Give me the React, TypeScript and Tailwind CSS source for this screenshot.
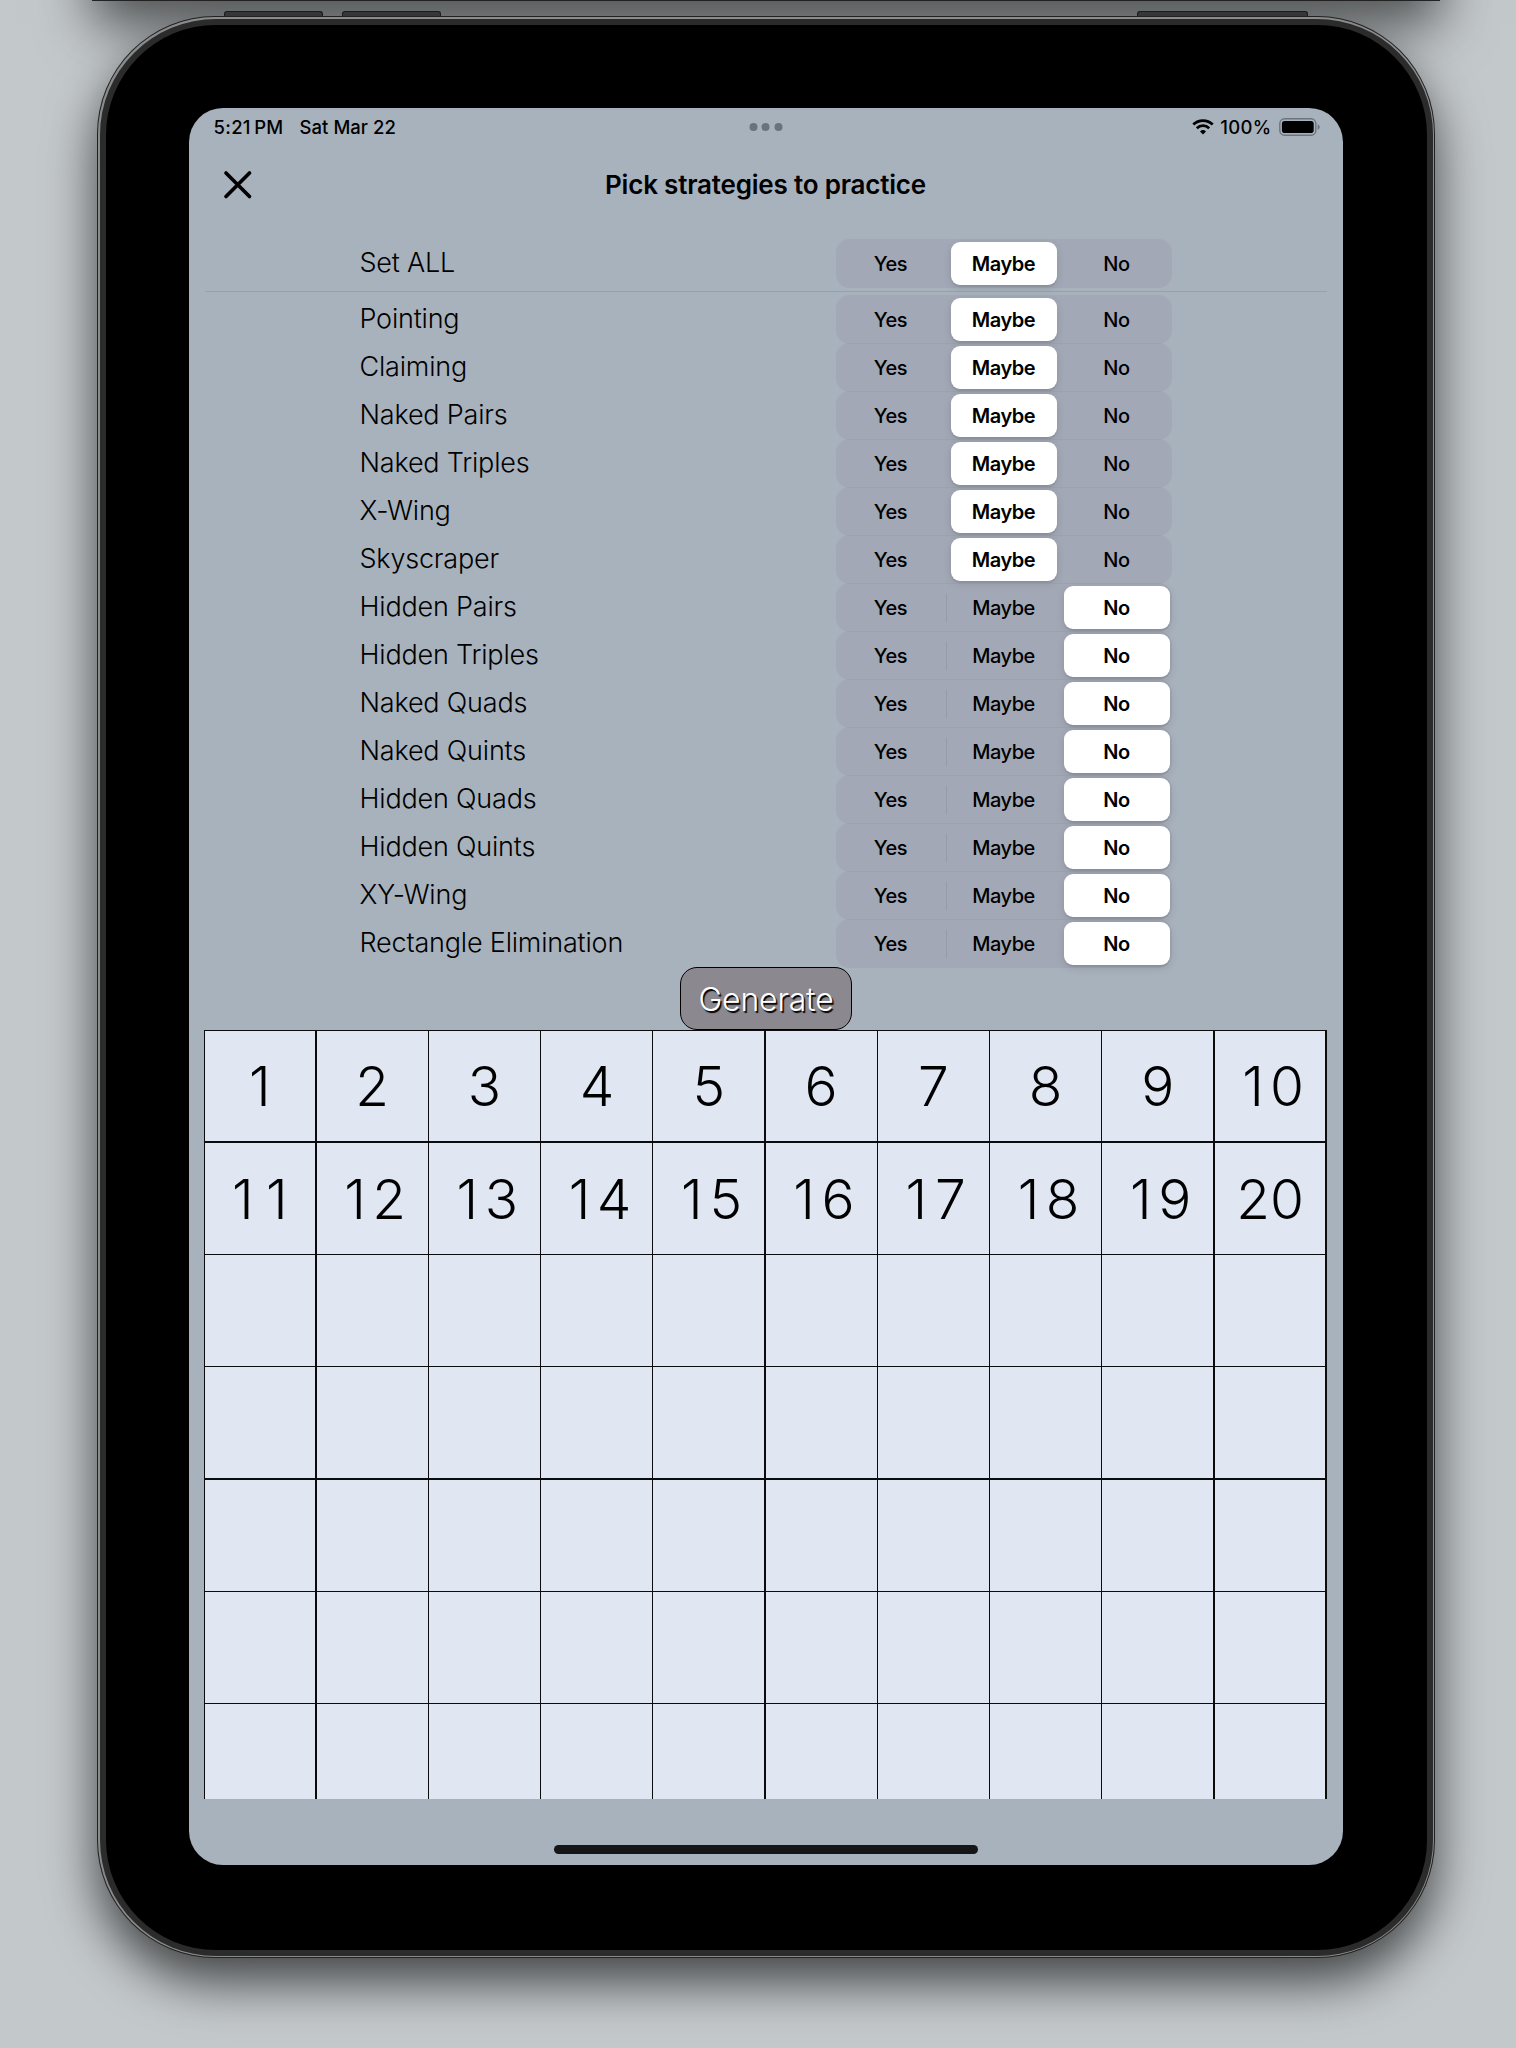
type Choice = "Yes" | "Maybe" | "No";

const CHOICES: Choice[] = ["Yes", "Maybe", "No"];

const STRATEGIES: { name: string; value: Choice }[] = [
  { name: "Pointing", value: "Maybe" },
  { name: "Claiming", value: "Maybe" },
  { name: "Naked Pairs", value: "Maybe" },
  { name: "Naked Triples", value: "Maybe" },
  { name: "X-Wing", value: "Maybe" },
  { name: "Skyscraper", value: "Maybe" },
  { name: "Hidden Pairs", value: "No" },
  { name: "Hidden Triples", value: "No" },
  { name: "Naked Quads", value: "No" },
  { name: "Naked Quints", value: "No" },
  { name: "Hidden Quads", value: "No" },
  { name: "Hidden Quints", value: "No" },
  { name: "XY-Wing", value: "No" },
  { name: "Rectangle Elimination", value: "No" },
];

const CELLS = Array.from({ length: 70 }, (_, i) => (i < 20 ? String(i + 1) : ""));

function Segmented({ value }: { value: Choice }) {
  return (
    <div className="relative flex h-[49px] w-[336px] justify-between rounded-[14px] bg-[#9693a5]/30 px-[2px]">
      {CHOICES.map((choice) => (
        <button
          key={choice}
          className={
            choice === value
              ? "my-[3px] w-[106px] rounded-[9px] bg-white pt-px text-[20px] font-[560] tracking-[-0.45px] shadow-[0_3px_8px_rgba(0,0,0,0.12),0_2px_1px_rgba(0,0,0,0.06)]"
              : "my-[3px] w-[106px] pt-px text-[20px] font-[450] tracking-[-0.45px]"
          }
        >
          {choice}
        </button>
      ))}
      {value === "No" && <span className="absolute left-[110px] top-[11px] h-[28px] w-px bg-[#979ca9]" />}
    </div>
  );
}

function Row({ name, value }: { name: string; value: Choice }) {
  return (
    <div className="-mb-px flex h-[49px] items-center justify-between pl-[171px] pr-[171px]">
      <span className="text-[27px] font-light leading-8 tracking-[-0.2px]">{name}</span>
      <Segmented value={value} />
    </div>
  );
}

function StatusBar() {
  return (
    <div className="relative flex h-[38px] items-center justify-between pl-[25px] pr-[23px] text-[18.5px] font-[450]">
      <div className="flex pt-[2px]">
        <span className="w-[86px]">
          <span className="tracking-[0.3px]">5:21</span>
          <span className="ml-[3.5px]">PM</span>
        </span>
        <span className="tracking-[0.05px]">Sat Mar 22</span>
      </div>
      <div className="absolute left-1/2 flex -translate-x-1/2 gap-[4.5px]">
        <span className="size-2 rounded-full bg-[#69737e]" />
        <span className="size-2 rounded-full bg-[#69737e]" />
        <span className="size-2 rounded-full bg-[#69737e]" />
      </div>
      <div className="flex items-center">
        <svg width="22" height="16" viewBox="0 0 22 16" className="mr-[6px]" fill="none" stroke="#000">
          <path d="M1.3 5.6a13.8 13.8 0 0 1 19.4 0" strokeWidth="2.8" />
          <path d="M4.8 9.2a8.9 8.9 0 0 1 12.4 0" strokeWidth="2.7" />
          <path d="M11 15.6l-3-3.2a4.3 4.3 0 0 1 6 0z" fill="#000" stroke="none" />
        </svg>
        <span className="mr-[7px] pt-[2px] tracking-[0.35px]">100%</span>
        <svg width="41" height="18" viewBox="0 0 41 18">
          <rect x="0.8" y="0.8" width="36" height="16.4" rx="4.8" fill="none" stroke="#6c757f" strokeWidth="1.4" />
          <rect x="2.9" y="2.9" width="31.8" height="12.2" rx="2.8" />
          <path d="M38.6 6.2c1.3.5 2.1 1.6 2.1 2.8s-.8 2.3-2.1 2.8z" fill="#6c757f" />
        </svg>
      </div>
    </div>
  );
}

export default function App() {
  return (
    <div className="relative flex h-[2048px] w-[1516px] flex-col overflow-hidden bg-[#c3c8cb] font-['Inter',sans-serif] text-black">
      <div className="ml-[92px] -mt-[400px] h-[401px] w-[1348px] shrink-0 bg-[#232325] shadow-[0_24px_50px_rgba(0,0,0,0.6)]" />

      <div className="relative mt-[10px] flex h-[5px] shrink-0 pl-[224px]">
        <span className="h-[6px] w-[99px] shrink-0 rounded-t-[3px] border border-b-0 border-[#1e1f1f] bg-[#3c3d3d]" />
        <span className="ml-[19px] h-[6px] w-[99px] shrink-0 rounded-t-[3px] border border-b-0 border-[#1e1f1f] bg-[#3c3d3d]" />
        <span className="ml-[696px] h-[6px] w-[171px] shrink-0 rounded-t-[3px] border border-b-0 border-[#1e1f1f] bg-[#3c3d3d]" />
      </div>

      <div className="relative ml-[97px] h-[1942px] w-[1338px] shrink-0 rounded-[118px] bg-[#202121] p-px shadow-[0_24px_50px_rgba(0,0,0,0.66)]">
        <div className="size-full rounded-[117px] bg-[#8a8b8b] p-[1.5px]">
          <div className="size-full rounded-[116px] bg-[#2b2b2b] p-[6px]">
            <div className="size-full rounded-[110px] bg-black pl-[83px] pt-[83px]">
              <div className="flex h-[1757px] w-[1154px] flex-col overflow-hidden rounded-[34px] bg-[#a8b2bc]">
                <StatusBar />

                <div className="relative flex h-[77px] items-center justify-center pt-[2px]">
                  <svg
                    width="30"
                    height="30"
                    viewBox="0 0 30 30"
                    className="absolute left-[34px] top-[24px]"
                    fill="none"
                    stroke="#000"
                    strokeWidth="3.7"
                    strokeLinecap="round"
                  >
                    <path d="M3 3L26.5 26.5M26.5 3L3 26.5" />
                  </svg>
                  <h1 className="text-[26px] font-semibold leading-8 tracking-[-0.2px]">Pick strategies to practice</h1>
                </div>

                <div className="mt-[16px]">
                  <Row name="Set ALL" value="Maybe" />
                </div>
                <div className="mx-4 mt-[4px] h-px bg-[#98a1ab]" />

                <div className="mt-[3px] flex flex-col">
                  {STRATEGIES.map((s) => (
                    <Row key={s.name} name={s.name} value={s.value} />
                  ))}
                </div>

                <button className="z-10 flex h-[63px] w-[172px] shrink-0 items-center justify-center self-center rounded-[17px] border border-black bg-[#8b898f] pl-px pt-[3px] text-[32px] font-light tracking-[-0.2px] text-white [text-shadow:1.5px_1.5px_1px_#000]">
                  Generate
                </button>

                <div className="ml-[15px] h-[769px] w-[1123px] shrink-0 overflow-hidden">
                  <div className="grid w-full auto-rows-[110.9px] grid-cols-10 gap-[1.4px] bg-[#0b0d0d] p-px">
                    {CELLS.map((label, i) => (
                      <div
                        key={i}
                        className="flex items-center justify-center bg-[#e0e6f2] pt-[2px] text-[55px] font-light leading-none"
                      >
                        {label.split("").map((digit, d) => (
                          <span key={d} className="w-[34px] text-center">
                            {digit}
                          </span>
                        ))}
                      </div>
                    ))}
                  </div>
                </div>

                <div className="mt-[46px] h-[9px] w-[424px] shrink-0 self-center rounded-full bg-[#161617]" />
              </div>
            </div>
          </div>
        </div>
      </div>
    </div>
  );
}
